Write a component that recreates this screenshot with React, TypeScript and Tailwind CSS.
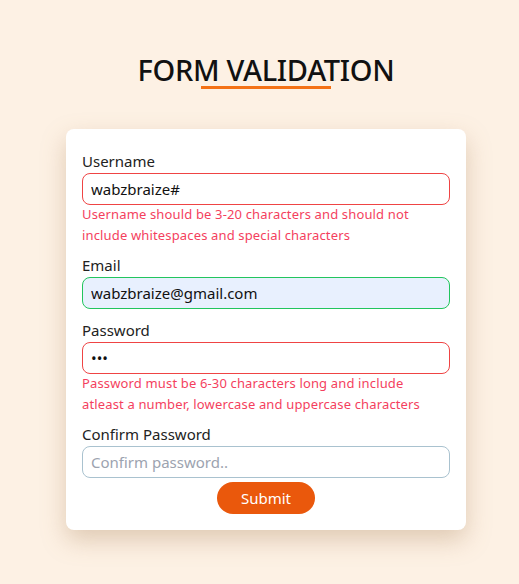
import { useState } from "react";

const font = { fontFamily: '"Noto Sans", "Open Sans", sans-serif' };

const App = () => {
    const [username, setUsername] = useState("wabzbraize#");
    const [email, setEmail] = useState("wabzbraize@gmail.com");
    const [password, setPassword] = useState("abc");
    const [confirm, setConfirm] = useState("");

    return (
        <main className="min-h-screen w-full bg-[#fdf1e4] flex flex-col items-center pt-[52px] pl-[13px]" style={font}>
            {/* Heading */}
            <div className="flex flex-col items-center">
                <h1 className="text-[29px] leading-[36px] font-medium text-[#111] tracking-[-0.3px]">FORM VALIDATION</h1>
                <div className="w-[130px] h-[3px] bg-[#f47216] -mt-[2px]" />
            </div>

            {/* Card */}
            <form
                className="mt-[40px] w-[400px] bg-white rounded-lg px-4 pt-[22px] pb-[16px] shadow-[0_10px_25px_rgba(170,130,90,0.35)]"
                onSubmit={(e) => e.preventDefault()}
            >
                {/* Username */}
                <div className="mb-[9px]">
                    <label htmlFor="username" className="block text-[15px] leading-5 text-[#222] mb-[2px]">Username</label>
                    <input
                        id="username" type="text" value={username}
                        onChange={(e) => setUsername(e.target.value)}
                        className="w-full h-[32px] px-2 rounded-lg border border-[#ef4444] text-[15px] text-[#111] outline-none"
                    />
                    <p className="text-[13px] leading-[21px] tracking-[0.15px] text-[#f43f5e] -mt-[1px] pr-[6px]">
                        Username should be 3-20 characters and should not include whitespaces and special characters
                    </p>
                </div>

                {/* Email */}
                <div className="mb-[11px]">
                    <label htmlFor="email" className="block text-[15px] leading-5 text-[#222] mb-[2px]">Email</label>
                    <input
                        id="email" type="email" value={email}
                        onChange={(e) => setEmail(e.target.value)}
                        className="w-full h-[32px] px-2 rounded-lg border border-[#22c55e] bg-[#e8f0fe] text-[15px] text-[#111] outline-none"
                    />
                </div>

                {/* Password */}
                <div className="mb-[9px]">
                    <label htmlFor="password" className="block text-[15px] leading-5 text-[#222] mb-[2px]">Password</label>
                    <input
                        id="password" type="password" value={password}
                        onChange={(e) => setPassword(e.target.value)}
                        className="w-full h-[32px] px-2 rounded-lg border border-[#ef4444] text-[15px] text-[#111] outline-none"
                    />
                    <p className="text-[13px] leading-[21px] tracking-[0.15px] text-[#f43f5e] -mt-[1px] pr-[6px]">
                        Password must be 6-30 characters long and include atleast a number, lowercase and uppercase characters
                    </p>
                </div>

                {/* Confirm Password */}
                <div>
                    <label htmlFor="confirm" className="block text-[15px] leading-5 text-[#222] mb-[2px]">Confirm Password</label>
                    <input
                        id="confirm" type="password" value={confirm} placeholder="Confirm password.."
                        onChange={(e) => setConfirm(e.target.value)}
                        className="w-full h-[32px] px-2 rounded-lg border border-[#a9c2cf] text-[15px] text-[#111] placeholder:text-[#9ca3af] outline-none"
                    />
                </div>

                <div className="flex justify-center mt-[4px]">
                    <button type="submit" className="w-[98px] h-[32px] rounded-full bg-[#ea580c] text-white text-[15px]">Submit</button>
                </div>
            </form>
        </main>
    );
};

export default App;
